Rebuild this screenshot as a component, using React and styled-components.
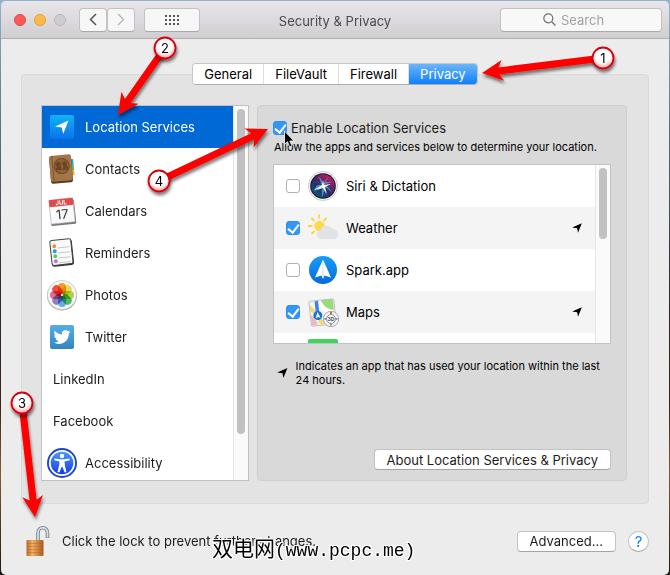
import React, { useState } from 'react';
import styled, { createGlobalStyle } from 'styled-components';

const GlobalStyle = createGlobalStyle`
  * {
    box-sizing: border-box;
  }

  body {
    margin: 0;
    background: linear-gradient(#93b4cc 0, #5d7890 20%, #2e2a30 50%, #3a2218 70%, #8a5a2c 82%, #1d1510 100%);
    font-family: Inter, 'Noto Sans CJK SC', sans-serif;
    font-size: 13px;
    color: #1c1c1c;
  }

  button, input {
    font-family: inherit;
    font-size: 13px;
    color: inherit;
  }
`;

const Desktop = styled.div`
  position: relative;
  min-height: 100vh;
  padding: 1px;
  overflow: hidden;
`;

const Window = styled.div`
  border-radius: 5px;
  background: #ececec;
  overflow: hidden;
`;

const TitleBar = styled.header`
  display: grid;
  grid-template-columns: 1fr auto 1fr;
  align-items: center;
  height: 38px;
  padding: 0 7px 0 13px;
  background: linear-gradient(#e9e6e9, #d1ced1);
  border-bottom: 1px solid #b4b1b4;
`;

const Title = styled.h1`
  margin: 0;
  padding: 3px 6px 0 0;
  font-size: 13px;
  font-weight: 400;
  color: #4a4a4a;
`;

const Controls = styled.div`
  display: flex;
  align-items: center;
`;

const Lights = styled.div`
  display: flex;
  gap: 8px;
  margin-right: 13px;
`;

const Light = styled.button`
  width: 12px;
  height: 12px;
  padding: 0;
  border: 1px solid ${props => props.$edge};
  border-radius: 50%;
  background: ${props => props.$fill};
`;

const NavButtons = styled.div`
  display: flex;
  margin-right: 9px;
`;

const ToolButton = styled.button`
  display: flex;
  align-items: center;
  justify-content: center;
  width: ${props => (props.$wide ? '56px' : '28px')};
  height: 24px;
  padding: 0;
  border: 1px solid #c3c1c3;
  border-bottom-color: #aaa8aa;
  border-radius: 4px;
  background: #f8f7f8;
`;

const SearchBox = styled.label`
  justify-self: end;
  display: flex;
  align-items: center;
  gap: 5px;
  width: 162px;
  height: 24px;
  padding-left: 42px;
  border: 1px solid #c3c1c3;
  border-bottom-color: #aaa8aa;
  border-radius: 4px;
  background: #f9f8f9;
`;

const SearchInput = styled.input`
  flex: 1;
  min-width: 0;
  padding: 0;
  border: none;
  outline: none;
  background: transparent;

  &::placeholder {
    color: #a3a1a3;
    opacity: 1;
  }
`;

const Content = styled.main`
  padding: 24px 20px 0;
`;

const Tabs = styled.div`
  display: flex;
  justify-content: center;
`;

const TabBar = styled.div`
  position: relative;
  display: flex;
  margin-bottom: -11px;
  border: 1px solid #c6c6c6;
  border-bottom-color: #adadad;
  border-radius: 4px;
  background: #fff;
  overflow: hidden;
`;

const Tab = styled.button`
  height: 20px;
  padding: 0 11px;
  border: none;
  border-left: 1px solid #dedede;
  background: ${props => (props.$active ? 'linear-gradient(#6bb5f9, #0f80fb)' : '#fff')};
  color: ${props => (props.$active ? '#fff' : '#000')};

  &:first-child {
    border-left: none;
  }
`;

const Panel = styled.div`
  display: grid;
  grid-template-columns: 208px 1fr;
  gap: 8px;
  padding: 30px 21px 22px 19px;
  border: 1px solid #dadada;
  border-radius: 4px;
  background: #e3e3e3;
`;

const ListBox = styled.div`
  display: grid;
  grid-template-columns: 1fr 15px;
  height: ${props => props.$height};
  border: 1px solid #c2c2c2;
  background: #fff;
  overflow: hidden;
`;

const List = styled.ul`
  margin: 0;
  padding: 0;
  min-height: 0;
  list-style: none;
  overflow: hidden;
`;

const Track = styled.div`
  padding: 3px;
  border-left: 1px solid #e6e6e6;
  background: #fafafa;
`;

const Thumb = styled.div`
  height: ${props => props.$length};
  border-radius: 4px;
  background: #c1c1c1;
`;

const ServiceRow = styled.li`
  display: flex;
  align-items: center;
  gap: 7px;
  height: 42px;
  padding-left: ${props => (props.$plain ? '11px' : '4px')};
  background: ${props => (props.$selected ? '#0069d6' : '#fff')};
  color: ${props => (props.$selected ? '#fff' : 'inherit')};
`;

const Detail = styled.section`
  display: flex;
  flex-direction: column;
  padding: 14px 15px 10px;
  border: 1px solid #cfcfcf;
  border-radius: 4px;
  background: #d9d9d9;
`;

const CheckLabel = styled.label`
  display: flex;
  align-items: center;
  gap: 4px;
`;

const CheckBox = styled.input`
  appearance: none;
  display: flex;
  justify-content: center;
  flex: none;
  width: 14px;
  height: 14px;
  margin: 0;
  border: 1px solid #b0b0b0;
  border-radius: 3px;
  background: #fff;

  &:checked {
    border-color: #2c8ff0;
    background: #3496f6;
  }

  &:checked::after {
    content: '';
    width: 5px;
    height: 9px;
    border: solid #fff;
    border-width: 0 2px 2px 0;
    transform: rotate(38deg);
  }
`;

const Hint = styled.p`
  margin: 4px 0 10px 1px;
  font-size: 11px;
  line-height: 14px;
  color: #000;
`;

const AppRow = styled.li`
  display: flex;
  align-items: center;
  height: 42px;
  padding: 0 13px 0 12px;
  background: ${props => (props.$shaded ? '#f4f4f4' : '#fff')};
  color: #000;
`;

const AppLabel = styled.label`
  flex: 1;
  display: flex;
  align-items: center;
  gap: 7px;
`;

const Legend = styled.div`
  display: flex;
  align-items: center;
  gap: 8px;
  margin: 15px 0 0 4px;
  font-size: 11px;
  line-height: 14px;
  color: #000;
`;

const PushButton = styled.button`
  height: 21px;
  padding: 0 12px;
  border: 1px solid #c2c2c2;
  border-bottom-color: #a5a5a5;
  border-radius: 4px;
  background: #fff;
`;

const DetailFooter = styled.div`
  display: flex;
  justify-content: flex-end;
  margin-top: auto;
`;

const Footer = styled.footer`
  display: flex;
  align-items: center;
  gap: 12px;
  padding: 21px 0 18px 4px;
`;

const LockText = styled.span`
  flex: 1;
`;

const HelpButton = styled.button`
  width: 21px;
  height: 21px;
  padding: 0;
  border: 1px solid #c2c2c2;
  border-bottom-color: #a5a5a5;
  border-radius: 50%;
  background: #fff;
  color: #0a84ff;
  font-size: 15px;
  line-height: 19px;
`;

const Overlay = styled.svg`
  position: absolute;
  top: 0;
  left: 0;
  pointer-events: none;
`;

const Watermark = styled.div`
  position: absolute;
  left: 212px;
  top: 538px;
  font-family: 'Liberation Mono', 'Noto Sans CJK SC', monospace;
  font-size: 18px;
  line-height: 26px;
  color: #000;
  text-shadow: 1px 0 #fff, -1px 0 #fff, 0 1px #fff, 0 -1px #fff, 1px 1px #fff, -1px -1px #fff, 1px -1px #fff, -1px 1px #fff;
`;

const WatermarkName = styled.span`
  font-size: 21px;
`;

const Icon = ({ children }) => (
  <svg width="32" height="32" viewBox="0 0 32 32" aria-hidden="true">{children}</svg>
);

const Pointer = ({ size = 11 }) => (
  <svg width={size} height={size} viewBox="0 0 12 12" aria-hidden="true">
    <path d="M11.8 .4 7.2 11.6 6.2 6.2 .2 5.4z" fill="#000" />
  </svg>
);

const LocationIcon = () => (
  <Icon>
    <defs>
      <linearGradient id="loc" x2="0" y2="1">
        <stop stopColor="#10b2f8" />
        <stop offset="1" stopColor="#0874e8" />
      </linearGradient>
    </defs>
    <rect x="4" y="4" width="24" height="24" rx="2" fill="url(#loc)" />
    <path d="M22.500 9.500 17.200 23l-1.400-6.500L9 15.500z" fill="#fff" />
  </Icon>
);

const ContactsIcon = () => (
  <Icon>
    <g transform="rotate(-5 16 16)">
      <path d="M24 7h4v6h-4z" fill="#24a9d8" />
      <path d="M24 13h4v5h-4z" fill="#4cc054" />
      <path d="M24 18h4v5h-4z" fill="#efb32c" />
      <rect x="4" y="3" width="22" height="27" rx="2" fill="#5d3d20" />
      <rect x="4" y="2" width="22" height="26" rx="2" fill="#a37547" />
      <path d="M7 2v26" stroke="#7d5731" />
      <circle cx="16" cy="13" r="7.5" fill="#916339" stroke="#6f4826" />
      <path d="M13 8.500a2.500 2.500 0 0 1 2 4c0 2 1 2 1 4.500H9.500c0-2 1.500-2 1.500-4a2.500 2.500 0 0 1 2-4.500M19 8.500a2.500 2.500 0 0 1 2 4c0 2 1.500 2 1.500 4.500H17c0-2 .5-2 .5-4a2.500 2.500 0 0 1 1.500-4.500" fill="#704622" />
    </g>
  </Icon>
);

const CalendarIcon = () => (
  <Icon>
    <g transform="rotate(-6 16 16)">
      <rect x="4" y="6" width="25" height="24" rx="1" fill="#77787a" />
      <rect x="4" y="4" width="24" height="24" rx="1" fill="#f9f9f9" stroke="#b5b5b5" strokeWidth=".6" />
      <path d="M4 4h24v7H4z" fill="#e34747" />
      <text x="16" y="9.700" textAnchor="middle" fontSize="6" fontWeight="700" fill="#fff">JUL</text>
      <text x="16" y="24" textAnchor="middle" fontSize="13" fill="#333">17</text>
    </g>
  </Icon>
);

const RemindersIcon = () => (
  <Icon>
    <g transform="rotate(-6 16 16)">
      <rect x="5" y="3" width="22" height="26" rx="2.500" fill="#2d2d2d" />
      <rect x="5" y="2.500" width="21" height="25" rx="2" fill="#fafafa" stroke="#444" />
      <path d="M12 10.500h12M12 15.500h12M12 20.500h12M12 25.500h12" stroke="#c9c9c9" />
      <circle cx="9" cy="8.500" r="2" fill="#f48b2e" />
      <circle cx="9" cy="13.500" r="2" fill="#199df0" />
      <circle cx="9" cy="18.500" r="2" fill="#5ccb4c" />
      <circle cx="9" cy="23.500" r="2" fill="#b777dd" />
    </g>
  </Icon>
);

const petals = ['#fb9d2a', '#f0e04a', '#b4d84a', '#4fbf6b', '#6bb4ee', '#9684c4', '#e0709b', '#f5503f'];

const PhotosIcon = () => (
  <Icon>
    <circle cx="16" cy="16.500" r="15" fill="#999" />
    <circle cx="16" cy="16" r="14.500" fill="#f7f7f7" stroke="#ccc" strokeWidth=".7" />
    {petals.map((color, i) => (
      <rect
        key={color}
        x="12"
        y="4"
        width="8"
        height="11.500"
        rx="4"
        fill={color}
        style={{ mixBlendMode: 'multiply' }}
        transform={`rotate(${i * 45} 16 16)`}
      />
    ))}
    <circle cx="16" cy="16" r="1" fill="#fff" />
  </Icon>
);

const TwitterIcon = () => (
  <Icon>
    <defs>
      <linearGradient id="tw" x2="0" y2="1">
        <stop stopColor="#52afe6" />
        <stop offset="1" stopColor="#3386bd" />
      </linearGradient>
    </defs>
    <rect x="4" y="4" width="24" height="24" rx="2" fill="url(#tw)" />
    <path transform="translate(7.500 7.500) scale(.71)" fill="#fff" d="M23.950 4.570a10 10 0 0 1-2.820.770 4.960 4.960 0 0 0 2.160-2.720c-.95.550-2 .95-3.130 1.180a4.920 4.920 0 0 0-8.380 4.480A13.950 13.950 0 0 1 1.640 3.160a4.820 4.820 0 0 0-.67 2.480c0 1.700.87 3.210 2.190 4.090a4.900 4.900 0 0 1-2.230-.62v.06a4.920 4.920 0 0 0 3.950 4.830 5 5 0 0 1-2.210.08 4.940 4.940 0 0 0 4.600 3.420A9.870 9.870 0 0 1 0 19.540a13.990 13.990 0 0 0 7.550 2.210c9.050 0 14-7.500 14-13.990 0-.21 0-.42-.02-.63a9.940 9.940 0 0 0 2.420-2.560z" />
  </Icon>
);

const AccessibilityIcon = () => (
  <Icon>
    <defs>
      <linearGradient id="acc" x2="0" y2="1">
        <stop stopColor="#4f9df8" />
        <stop offset="1" stopColor="#1238e6" />
      </linearGradient>
    </defs>
    <circle cx="16" cy="16" r="15" fill="#1c45cc" />
    <circle cx="16" cy="16" r="12.200" fill="url(#acc)" stroke="#fff" strokeWidth="1.800" />
    <circle cx="16" cy="9" r="2.200" fill="#fff" />
    <path d="M8.500 11.500 14 12.200h4l5.500-.7.200 1.700-5.200 1.300.5 4.500 1.500 6-1.800.5L16.500 20h-1l-2.200 5.500-1.800-.5 1.500-6 .5-4.500-5.200-1.300z" fill="#fff" />
  </Icon>
);

const SiriIcon = () => (
  <Icon>
    <defs>
      <linearGradient id="siri" x1="0" y1="1" x2=".7" y2="0">
        <stop stopColor="#09647e" />
        <stop offset=".5" stopColor="#272b68" />
        <stop offset="1" stopColor="#bd1b63" />
      </linearGradient>
    </defs>
    <circle cx="16" cy="16" r="14.500" fill="#f5f5f5" stroke="#bfbfbf" strokeWidth=".8" />
    <circle cx="16" cy="16" r="12.800" fill="#12122b" />
    <circle cx="16" cy="16" r="11.800" fill="url(#siri)" />
    <path d="M5 13q7-2 11 3Q9 12 7 22q4-6 9-6-2 5-1 11 3-5 2-10 4 1 8 6-2-6-8-8 4-2 8-3-5-1-9 2Q15 8 11 7q3 3 3 7-4-3-9-1" fill="#43cde0" fillOpacity=".65" />
    <path d="M15 15 22 6l-5 9 5 1-5 1 3 10-4-9-8 3 7-5z" fill="#f07abe" fillOpacity=".7" />
    <path d="m7 20 8-5 1-5 1 5 7-1-6 3 2 7-4-6z" fill="#e8ffff" />
  </Icon>
);

const WeatherIcon = () => (
  <Icon>
    <path d="M12 2.500v4M4.500 6l3 3M1 14h4.500M4.500 22l3-3M19.500 6l-3 3" stroke="#ffd23d" strokeWidth="1.800" />
    <circle cx="12.500" cy="14" r="5.200" fill="#ffd84d" />
    <path d="M14 27a4.500 4.500 0 0 1-1-8.800 7 7 0 0 1 12.500-1.200A5 5 0 0 1 27 27z" fill="#e2e3e6" />
  </Icon>
);

const SparkIcon = () => (
  <Icon>
    <defs>
      <linearGradient id="spark" x2="0" y2="1">
        <stop stopColor="#159df8" />
        <stop offset="1" stopColor="#066bdd" />
      </linearGradient>
    </defs>
    <circle cx="16" cy="16" r="14" fill="url(#spark)" />
    <path d="m16 5.500 8 18-6.500-2L16 25l-1.500-3.500-6.500 2z" fill="#fff" />
    <path d="M16 7v17" stroke="#c7d3df" strokeWidth=".8" />
  </Icon>
);

const MapsIcon = () => (
  <Icon>
    <g transform="rotate(-6 16 16)">
      <rect x="3" y="4" width="25" height="25" rx="1.500" fill="#f5f3ec" stroke="#b5b5b5" strokeWidth=".8" />
      <path d="M15 4h12v11q-9-2-12-11" fill="#9bda7b" />
      <path d="M3.500 8q6 5 13 20h-5Q10 18 3.500 14z" fill="#f9d76b" />
      <path d="M3.500 18q5 3 6 10.500h-6z" fill="#efb8c8" />
      <path d="M13 5q4 11 14 14" stroke="#fff" strokeWidth="3" fill="none" />
      <path d="M10.500 4.500V16" stroke="#3685ed" strokeWidth="3.500" />
      <circle cx="10.500" cy="19" r="4.500" fill="#1774de" />
      <path d="m10.500 15.500 2.500 6-2.500-1-2.500 1z" fill="#fff" />
    </g>
    <circle cx="24" cy="23" r="7.700" fill="#f4f4f4" stroke="#a8a8a8" />
    <circle cx="24" cy="23" r="4.500" fill="#f9f9f9" stroke="#66788d" strokeWidth=".8" />
    <path d="M24 16v2" stroke="#d22" strokeWidth="1.500" />
    <path d="M17.500 23h1.500M29 23h1.500M24 28v1.500" stroke="#333" />
    <text x="24" y="25" textAnchor="middle" fontSize="5" fontWeight="700" fill="#3e5268">3D</text>
  </Icon>
);

const GreenIcon = () => (
  <Icon>
    <rect x="1" y="1" width="30" height="29" rx="2" fill="#3dd65b" />
    <path d="M8 8q8-6 16 0" fill="#50df63" />
  </Icon>
);

const LockIcon = () => (
  <svg width="25" height="32" viewBox="1 0 25 32" aria-hidden="true">
    <defs>
      <linearGradient id="brass">
        <stop stopColor="#b96a25" />
        <stop offset=".35" stopColor="#f0ae62" />
        <stop offset="1" stopColor="#a95a1d" />
      </linearGradient>
    </defs>
    <path d="M14 16V8c0-7 9.500-7 9.500 0v5" fill="none" stroke="#75828a" strokeWidth="3.600" />
    <path d="M14 16V8c0-7 9.500-7 9.500 0v4.500" fill="none" stroke="#d5dee2" strokeWidth="1.800" />
    <rect x="2.500" y="15" width="17" height="16" rx="1" fill="url(#brass)" />
    <path d="M3 18.500h16M3 21.500h16M3 24.500h16M3 27.500h16" stroke="#9e561f" strokeOpacity=".35" />
  </svg>
);

const services = [
  { name: 'Location Services', icon: LocationIcon },
  { name: 'Contacts', icon: ContactsIcon },
  { name: 'Calendars', icon: CalendarIcon },
  { name: 'Reminders', icon: RemindersIcon },
  { name: 'Photos', icon: PhotosIcon },
  { name: 'Twitter', icon: TwitterIcon },
  { name: 'LinkedIn' },
  { name: 'Facebook' },
  { name: 'Accessibility', icon: AccessibilityIcon },
];

const apps = [
  { name: 'Siri & Dictation', icon: SiriIcon, on: false },
  { name: 'Weather', icon: WeatherIcon, on: true, recent: true },
  { name: 'Spark.app', icon: SparkIcon, on: false },
  { name: 'Maps', icon: MapsIcon, on: true, recent: true },
];

const callouts = [
  { n: 1, from: [603, 58], to: [482, 73] },
  { n: 2, from: [165, 48], to: [118, 115] },
  { n: 3, from: [22, 403], to: [35, 517] },
  { n: 4, from: [159, 181], to: [268, 129] },
];

const Callout = ({ n, from, to }) => {
  const dx = to[0] - from[0];
  const dy = to[1] - from[1];
  const length = Math.hypot(dx, dy);
  const angle = (Math.atan2(dy, dx) * 180) / Math.PI;

  return (
    <g>
      <g filter="url(#drop)">
        <path
          transform={`translate(${from[0]} ${from[1]}) rotate(${angle})`}
          d={`M0-3.500H${length - 17}L${length - 21}-10.500 ${length} 0 ${length - 21} 10.500 ${length - 17} 3.500H0z`}
          fill="#fe0000"
        />
      </g>
      <g filter="url(#drop)">
        <circle cx={from[0]} cy={from[1]} r="10.500" fill="url(#badge)" stroke="#d8000c" strokeWidth="1.800" />
      </g>
      <text x={from[0]} y={from[1] + 5} textAnchor="middle" fontSize="13" fill="#000">{n}</text>
    </g>
  );
};

const Callouts = () => (
  <Overlay width="670" height="575" viewBox="0 0 670 575">
    <defs>
      <filter id="drop" x="-30%" y="-50%" width="160%" height="220%">
        <feDropShadow dx="1" dy="3" stdDeviation="1.500" floodOpacity=".5" />
      </filter>
      <radialGradient id="badge" cx=".5" cy=".35" r=".65">
        <stop offset=".55" stopColor="#fff" />
        <stop offset="1" stopColor="#f7a3a8" />
      </radialGradient>
    </defs>
    {callouts.map(item => <Callout key={item.n} {...item} />)}
    <path d="M284.500 131v13.500l3-2.800 2.200 5.300 2.300-1-2.200-5h4.200z" fill="#000" stroke="#fff" strokeWidth=".8" />
  </Overlay>
);

const App = () => {
  const [tab, setTab] = useState('Privacy');
  const [selected, setSelected] = useState('Location Services');

  return (
    <Desktop>
      <GlobalStyle />
      <Window>
        <TitleBar>
          <Controls>
            <Lights>
              <Light aria-label="Close" $fill="#fc5b57" $edge="#e2463f" />
              <Light aria-label="Minimize" $fill="#fdb94a" $edge="#e09e3a" />
              <Light aria-label="Zoom" $fill="#cfcdcf" $edge="#b9b7b9" />
            </Lights>
            <NavButtons>
              <ToolButton aria-label="Back">
                <svg width="8" height="13" viewBox="0 0 8 13"><path d="M7 1 1.500 6.500 7 12" fill="none" stroke="#555" strokeWidth="1.500" /></svg>
              </ToolButton>
              <ToolButton aria-label="Forward">
                <svg width="8" height="13" viewBox="0 0 8 13"><path d="m1 1 5.500 5.500L1 12" fill="none" stroke="#b5b5b5" strokeWidth="1.300" /></svg>
              </ToolButton>
            </NavButtons>
            <ToolButton $wide aria-label="Show all">
              <svg width="14" height="10" viewBox="0 0 14 10">
                <path d="M0 1h14M0 5h14M0 9h14" stroke="#555" strokeWidth="2" strokeDasharray="2 2" />
              </svg>
            </ToolButton>
          </Controls>
          <Title>Security &amp; Privacy</Title>
          <SearchBox>
            <svg width="13" height="13" viewBox="0 0 13 13" aria-hidden="true">
              <circle cx="5.300" cy="5.300" r="4.500" fill="none" stroke="#707070" strokeWidth="1.200" />
              <path d="m8.700 8.700 3.800 3.800" stroke="#707070" strokeWidth="1.300" />
            </svg>
            <SearchInput type="text" placeholder="Search" aria-label="Search" />
          </SearchBox>
        </TitleBar>
        <Content>
          <Tabs>
            <TabBar>
              {['General', 'FileVault', 'Firewall', 'Privacy'].map(name => (
                <Tab key={name} $active={tab === name} onClick={() => setTab(name)}>{name}</Tab>
              ))}
            </TabBar>
          </Tabs>
          <Panel>
            <ListBox $height="376px">
              <List>
                {services.map(({ name, icon: ServiceIcon }) => (
                  <ServiceRow key={name} $plain={!ServiceIcon} $selected={selected === name} onClick={() => setSelected(name)}>
                    {ServiceIcon && <ServiceIcon />}
                    {name}
                  </ServiceRow>
                ))}
              </List>
              <Track><Thumb $length="325px" /></Track>
            </ListBox>
            <Detail>
              <CheckLabel>
                <CheckBox type="checkbox" defaultChecked />
                Enable Location Services
              </CheckLabel>
              <Hint>Allow the apps and services below to determine your location.</Hint>
              <ListBox $height="180px">
                <List>
                  {apps.map(({ name, icon: AppIcon, on, recent }, i) => (
                    <AppRow key={name} $shaded={i % 2 === 1}>
                      <AppLabel>
                        <CheckBox type="checkbox" defaultChecked={on} />
                        <AppIcon />
                        {name}
                      </AppLabel>
                      {recent && <Pointer size={10} />}
                    </AppRow>
                  ))}
                  <AppRow>
                    <AppLabel>
                      <CheckBox type="checkbox" aria-label="Messages" />
                      <GreenIcon />
                    </AppLabel>
                  </AppRow>
                </List>
                <Track><Thumb $length="71px" /></Track>
              </ListBox>
              <Legend>
                <Pointer size={12} />
                <span>Indicates an app that has used your location within the last 24 hours.</span>
              </Legend>
              <DetailFooter>
                <PushButton>About Location Services &amp; Privacy</PushButton>
              </DetailFooter>
            </Detail>
          </Panel>
          <Footer>
            <LockIcon />
            <LockText>Click the lock to prevent further changes.</LockText>
            <PushButton>Advanced...</PushButton>
            <HelpButton aria-label="Help">?</HelpButton>
          </Footer>
        </Content>
      </Window>
      <Callouts />
      <Watermark><WatermarkName>双电网</WatermarkName>(www.pcpc.me)</Watermark>
    </Desktop>
  );
};

export default App;
